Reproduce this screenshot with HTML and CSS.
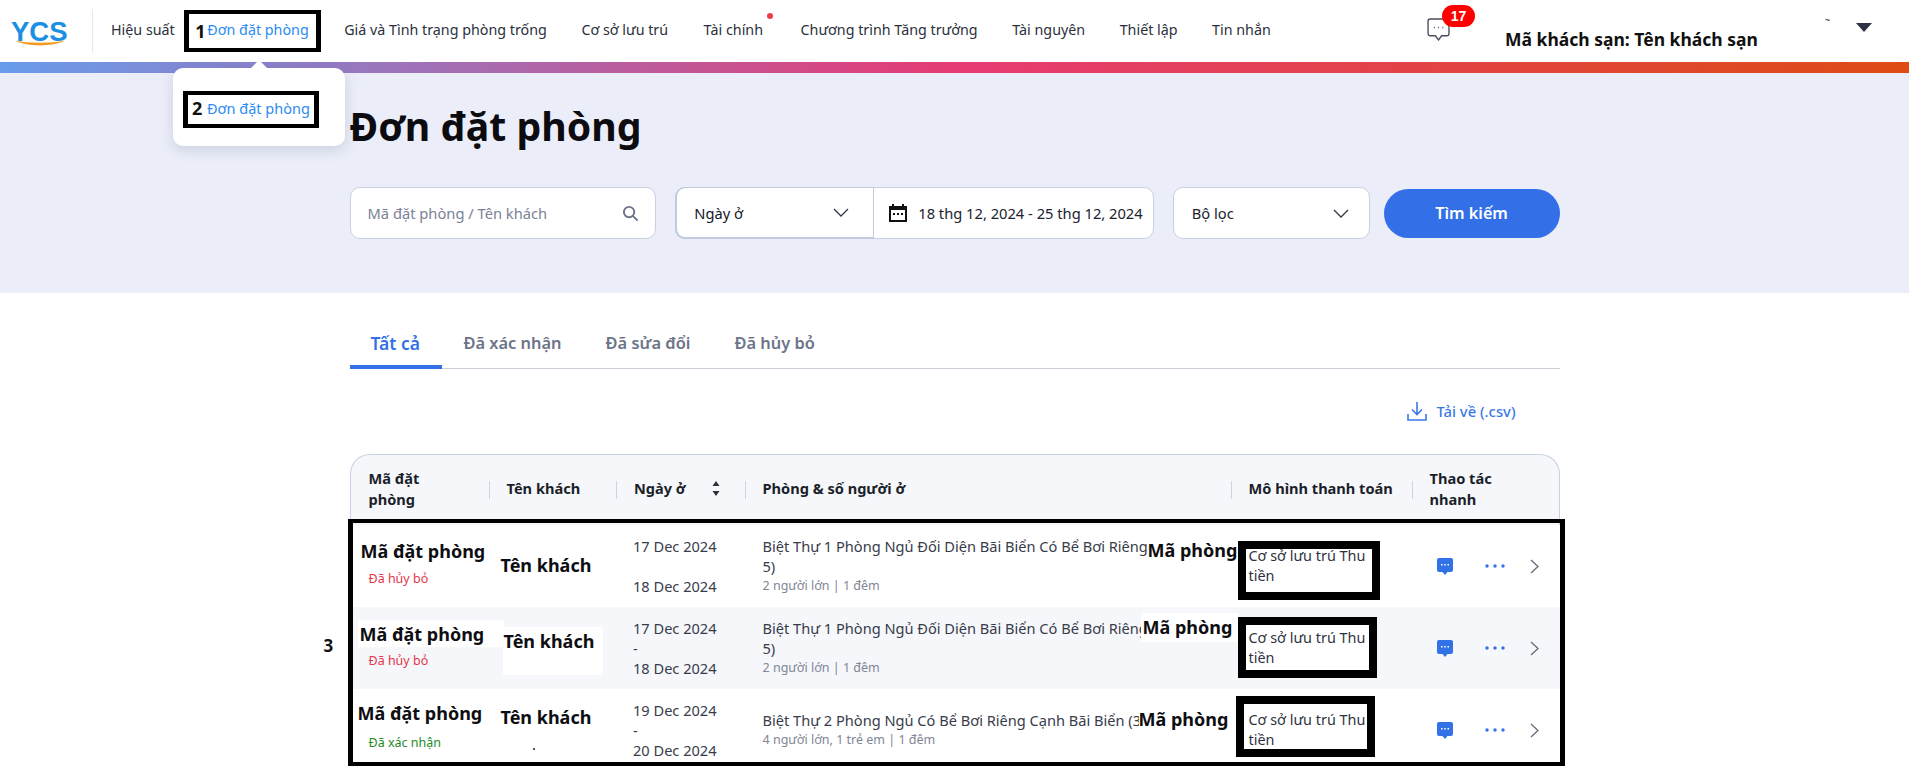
FILE: index.html
```html
<!DOCTYPE html>
<html lang="vi">
<head>
<meta charset="utf-8">
<title>Đơn đặt phòng</title>
<link rel="stylesheet" href="styles.css">
</head>
<body>
<header class="topbar">
  <div class="logo">
    <span class="logo-text">YCS</span>
    <svg class="logo-swoosh" viewBox="0 0 50 6" width="50" height="6"><path d="M0 0.500C14 3.500 36 3.500 50 0.500C38 7 12 7 0 0.500Z" fill="#f29d1f"/></svg>
  </div>
  <nav class="nav">
    <a class="nav-item nav-first">Hiệu suất</a>
    <a class="nav-item nav-active"><span class="mark mark-one"><b>1</b></span>Đơn đặt phòng</a>
    <a class="nav-item">Giá và Tình trạng phòng trống</a>
    <a class="nav-item">Cơ sở lưu trú</a>
    <a class="nav-item nav-dot">Tài chính</a>
    <a class="nav-item">Chương trình Tăng trưởng</a>
    <a class="nav-item">Tài nguyên</a>
    <a class="nav-item">Thiết lập</a>
    <a class="nav-item">Tin nhắn</a>
  </nav>
  <div class="account">
    <div class="inbox">
      <svg viewBox="0 0 22 22" width="23" height="23" fill="none" stroke="#4a4d5e" stroke-width="1.300"><path d="M3 1h16a2 2 0 0 1 2 2v12a2 2 0 0 1-2 2h-5l-3 4-3-4H3a2 2 0 0 1-2-2V3a2 2 0 0 1 2-2Z"/><path d="M6.500 9h.9M10.600 9h.9M14.700 9h.9" stroke-width="1.500"/></svg>
      <span class="badge">17</span>
    </div>
    <strong class="hotel">Mã khách sạn: Tên khách sạn</strong>
    <span class="tilde">~</span>
    <span class="caret"></span>
  </div>
</header>
<div class="rainbow"></div>

<div class="popup">
  <span class="mark mark-two"><b>2</b></span>
  <span class="popup-link">Đơn đặt phòng</span>
</div>

<section class="hero">
  <div class="wrap">
    <h1 class="title">Đơn đặt phòng</h1>
    <div class="filters">
      <div class="field search">
        <span class="placeholder">Mã đặt phòng / Tên khách</span>
        <svg viewBox="0 0 18 18" width="17" height="17" fill="none" stroke="#6d7487" stroke-width="2"><circle cx="7.500" cy="7.500" r="5.500"/><path d="M11.700 11.700 16.500 16.500"/></svg>
      </div>
      <div class="combo">
        <div class="combo-type">
          <span>Ngày ở</span>
          <svg class="chev" viewBox="0 0 16 9" width="16" height="9" fill="none" stroke="#333846" stroke-width="1.300"><path d="M1 1l7 7 7-7"/></svg>
        </div>
        <div class="combo-date">
          <svg viewBox="0 0 20 20" width="20" height="20"><path d="M1 3h3V1h2v2h8V1h2v2h3v16H1Z" fill="#111"/><rect x="3" y="7" width="14" height="10" fill="#fff"/><path d="M5 10h2v2H5zM9 10h2v2H9zM13 10h2v2h-2z" fill="#111"/></svg>
          <span>18 thg 12, 2024 - 25 thg 12, 2024</span>
        </div>
      </div>
      <div class="field select">
        <span>Bộ lọc</span>
        <svg class="chev" viewBox="0 0 16 9" width="16" height="9" fill="none" stroke="#333846" stroke-width="1.300"><path d="M1 1l7 7 7-7"/></svg>
      </div>
      <button class="submit">Tìm kiếm</button>
    </div>
  </div>
</section>

<main class="wrap content">
  <div class="tabs">
    <a class="tab tab-on">Tất cả</a>
    <a class="tab">Đã xác nhận</a>
    <a class="tab">Đã sửa đổi</a>
    <a class="tab">Đã hủy bỏ</a>
  </div>
  <div class="download">
    <svg viewBox="0 0 20 20" width="20" height="20" fill="none" stroke="#3b78e7" stroke-width="1.600"><path d="M10 1v12M5 8.500l5 5 5-5M1 13v6h18v-6"/></svg>
    <span>Tải về (.csv)</span>
  </div>

  <div class="table">
    <div class="thead">
      <div class="th">Mã đặt<br>phòng</div>
      <div class="th th-sep">Tên khách</div>
      <div class="th th-sep th-sort"><span class="th-date">Ngày ở</span>
        <svg viewBox="0 0 8 15" width="8" height="15" fill="#2c2f3a"><path d="M4 0l3.500 5H.5ZM4 15l3.500-5H.5Z"/></svg>
      </div>
      <div class="th th-sep">Phòng &amp; số người ở</div>
      <div class="th th-sep">Mô hình thanh toán</div>
      <div class="th th-sep">Thao tác<br>nhanh</div>
    </div>

    <div class="row">
      <div class="cell"><span class="status status-off">Đã hủy bỏ</span></div>
      <div class="cell"></div>
      <div class="cell dates">17 Dec 2024<br>&nbsp;<br>18 Dec 2024</div>
      <div class="cell room">Biệt Thự 1 Phòng Ngủ Đối Diện Bãi Biển Có Bể Bơi Riêng<br>5)<small>2 người lớn | 1 đêm</small></div>
      <div class="cell pay">Cơ sở lưu trú Thu tiền</div>
      <div class="cell actions">
        <svg class="a-chat" viewBox="0 0 16 17" width="16" height="17"><path d="M2 0h12a2 2 0 0 1 2 2v10a2 2 0 0 1-2 2h-3.500L8 17l-2.500-3H2a2 2 0 0 1-2-2V2a2 2 0 0 1 2-2Z" fill="#3371e6"/><path d="M4 6h1.500v1.500H4zM7.250 6h1.500v1.500h-1.500zM10.500 6H12v1.500h-1.500z" fill="#fff"/></svg>
        <svg class="a-dots" viewBox="0 0 20 4" width="20" height="4" fill="#3371e6"><circle cx="2" cy="2" r="1.700"/><circle cx="10" cy="2" r="1.700"/><circle cx="18" cy="2" r="1.700"/></svg>
        <svg class="a-next" viewBox="0 0 9 15" width="9" height="15" fill="none" stroke="#656b7a" stroke-width="1.300"><path d="M1 1l7 6.500-7 6.500"/></svg>
      </div>
      <b class="stamp id-a">Mã đặt phòng</b>
      <b class="stamp name-a">Tên khách</b>
      <b class="stamp room-a">Mã phòng</b>
      <span class="paybox pay-a"></span>
    </div>

    <div class="row row-alt">
      <div class="cell"><span class="status status-off">Đã hủy bỏ</span></div>
      <div class="cell"></div>
      <div class="cell dates">17 Dec 2024<br>-<br>18 Dec 2024</div>
      <div class="cell room">Biệt Thự 1 Phòng Ngủ Đối Diện Bãi Biển Có Bể Bơi Riêng<br>5)<small>2 người lớn | 1 đêm</small></div>
      <div class="cell pay">Cơ sở lưu trú Thu tiền</div>
      <div class="cell actions">
        <svg class="a-chat" viewBox="0 0 16 17" width="16" height="17"><path d="M2 0h12a2 2 0 0 1 2 2v10a2 2 0 0 1-2 2h-3.500L8 17l-2.500-3H2a2 2 0 0 1-2-2V2a2 2 0 0 1 2-2Z" fill="#3371e6"/><path d="M4 6h1.500v1.500H4zM7.250 6h1.500v1.500h-1.500zM10.500 6H12v1.500h-1.500z" fill="#fff"/></svg>
        <svg class="a-dots" viewBox="0 0 20 4" width="20" height="4" fill="#3371e6"><circle cx="2" cy="2" r="1.700"/><circle cx="10" cy="2" r="1.700"/><circle cx="18" cy="2" r="1.700"/></svg>
        <svg class="a-next" viewBox="0 0 9 15" width="9" height="15" fill="none" stroke="#656b7a" stroke-width="1.300"><path d="M1 1l7 6.500-7 6.500"/></svg>
      </div>
      <b class="stamp id-b">Mã đặt phòng</b>
      <b class="stamp name-b">Tên khách</b>
      <b class="stamp room-b">Mã phòng</b>
      <span class="paybox pay-b"></span>
    </div>

    <div class="row row-last">
      <div class="cell"><span class="status status-on">Đã xác nhận</span></div>
      <div class="cell"></div>
      <div class="cell dates">19 Dec 2024<br>-<br>20 Dec 2024</div>
      <div class="cell room">Biệt Thự 2 Phòng Ngủ Có Bể Bơi Riêng Cạnh Bãi Biển (3)<small>4 người lớn, 1 trẻ em | 1 đêm</small></div>
      <div class="cell pay">Cơ sở lưu trú Thu tiền</div>
      <div class="cell actions">
        <svg class="a-chat" viewBox="0 0 16 17" width="16" height="17"><path d="M2 0h12a2 2 0 0 1 2 2v10a2 2 0 0 1-2 2h-3.500L8 17l-2.500-3H2a2 2 0 0 1-2-2V2a2 2 0 0 1 2-2Z" fill="#3371e6"/><path d="M4 6h1.500v1.500H4zM7.250 6h1.500v1.500h-1.500zM10.500 6H12v1.500h-1.500z" fill="#fff"/></svg>
        <svg class="a-dots" viewBox="0 0 20 4" width="20" height="4" fill="#3371e6"><circle cx="2" cy="2" r="1.700"/><circle cx="10" cy="2" r="1.700"/><circle cx="18" cy="2" r="1.700"/></svg>
        <svg class="a-next" viewBox="0 0 9 15" width="9" height="15" fill="none" stroke="#656b7a" stroke-width="1.300"><path d="M1 1l7 6.500-7 6.500"/></svg>
      </div>
      <b class="stamp id-c">Mã đặt phòng</b>
      <b class="stamp name-c">Tên khách</b>
      <b class="stamp room-c">Mã phòng</b>
      <span class="paybox pay-c"></span>
      <i class="speck"></i>
    </div>

    <span class="frame"></span>
    <b class="frame-no">3</b>
  </div>
</main>
</body>
</html>
```
FILE: styles.css
```css
* { box-sizing: border-box; }
html, body { margin: 0; height: 769px; overflow: hidden; }
body {
  position: relative;
  font-family: "Noto Sans", "Open Sans", sans-serif;
  font-size: 14.700px;
  color: #2b2f3b;
  background: #fff;
}

/* top bar */
.topbar { display: flex; align-items: center; height: 62px; background: #fff; padding-left: 11px; }
.logo { position: relative; width: 82px; height: 44px; border-right: 1px solid #e6e8ef; flex: none; }
.logo-text {
  display: block;
  width: 58px;
  font: bold 27.500px/30px "Liberation Sans", sans-serif;
  color: #1c8fe3;
  margin-top: 8px;
}
.logo-swoosh { position: absolute; left: 4px; top: 31px; }
.nav { display: flex; flex: none; width: 1158px; align-items: center; gap: 34.500px; margin-left: 18px; padding-bottom: 2px; }
.nav-first { margin-right: -2px; }
.nav-item { position: relative; white-space: nowrap; font-size: 14.300px; line-height: 20px; color: #2b2f3b; }
.nav-active { color: #2b8bf2; margin-right: 1px; }
.nav-dot { margin-left: 1px; margin-right: 3px; }
.nav-dot::after {
  content: "";
  position: absolute;
  right: -10px;
  top: -7px;
  width: 6px;
  height: 6px;
  border-radius: 50%;
  background: #ee3a4e;
}
.mark {
  position: absolute;
  border: solid #000;
  border-width: 4px 5px;
  color: #111;
  font-size: 18px;
  line-height: 24px;
  pointer-events: none;
}
.mark-one { left: -23px; top: -10px; width: 137px; height: 42px; padding: 5px 0 0 6px; }
.mark-two { left: 10px; top: 23px; width: 136px; height: 37px; padding: 1px 0 0 4px; }

.account { position: relative; flex: 1; align-self: stretch; }
.inbox { position: absolute; left: 158px; top: 18px; width: 23px; height: 23px; }
.badge {
  position: absolute;
  left: 15px;
  top: -13px;
  width: 33px;
  height: 22px;
  border-radius: 11px;
  background: #fe0000;
  color: #fff;
  font: bold 14px/22px "Liberation Sans", sans-serif;
  text-align: center;
}
.hotel { position: absolute; left: 236px; top: 27px; white-space: nowrap; font-size: 17.500px; line-height: 24px; color: #111; }
.tilde { position: absolute; left: 556px; top: 14px; font-size: 9px; line-height: 12px; color: #111; }
.caret {
  position: absolute;
  left: 587px;
  top: 23px;
  border-left: 8px solid transparent;
  border-right: 8px solid transparent;
  border-top: 9px solid #2e3043;
}
.rainbow { height: 11px; background: linear-gradient(90deg, #689cec 0, #e63b74 50%, #df4b14 100%); }

/* menu */
.popup {
  position: absolute;
  left: 173px;
  top: 68px;
  width: 172px;
  height: 78px;
  background: #fff;
  border-radius: 10px;
  box-shadow: 0 4px 14px rgba(60, 70, 110, .18);
  z-index: 5;
}
.popup::before {
  content: "";
  position: absolute;
  left: 78px;
  top: -8px;
  border-left: 8px solid transparent;
  border-right: 8px solid transparent;
  border-bottom: 8px solid #fff;
}
.popup-link { position: absolute; left: 34px; top: 30px; white-space: nowrap; font-size: 14.500px; line-height: 20px; color: #2b8bf2; }

/* hero */
.wrap { width: 1210px; margin: 0 auto; }
.hero { height: 220px; background: #ebeef8; }
.title { margin: 0; padding-top: 26px; height: 114px; font-size: 39.200px; line-height: 54px; font-weight: 700; color: #0c0c10; }
.filters { display: flex; align-items: center; }
.field, .combo { height: 52px; background: #fff; border: 1px solid #c8d0e2; border-radius: 10px; }
.field { display: flex; align-items: center; justify-content: space-between; }
.search { width: 307px; padding: 0 16px 0 17px; }
.placeholder { color: #7a8296; }
.combo { display: flex; width: 479px; margin-left: 19px; }
.combo-type {
  display: flex;
  align-items: center;
  justify-content: space-between;
  width: 199px;
  padding: 0 24px 0 17px;
  border: solid #c1cbe0;
  border-width: 1px 1px 2px 2px;
  border-radius: 10px 0 0 10px;
  margin: -1px 0 -1px -1px;
  color: #15171f;
}
.combo-date { display: flex; align-items: center; gap: 10px; padding-left: 14px; white-space: nowrap; color: #20232d; }
.select { width: 197px; margin-left: 19px; padding: 0 20px 0 18px; color: #20232d; }
.submit {
  width: 176px;
  height: 49px;
  margin-left: 14px;
  border: 0;
  border-radius: 25px;
  background: #3370e8;
  color: #fff;
  font: 600 16.200px "Noto Sans", sans-serif;
}

/* tabs */
.tabs { display: flex; height: 76px; padding-top: 31px; border-bottom: 1px solid #c9ced8; }
.tab {
  height: 45px;
  padding: 8px 22px 0;
  font-size: 16.400px;
  line-height: 22px;
  font-weight: 600;
  color: #6c7488;
  white-space: nowrap;
}
.tab-on { width: 92px; color: #3370e8; border-bottom: 4px solid #3370e8; border-radius: 2px 2px 0 0; padding-left: 21px; padding-right: 0; font-size: 17.500px; }
.download { display: flex; justify-content: flex-end; align-items: center; gap: 9px; height: 85px; padding: 0 44px 1px 0; color: #3b78e7; font-weight: 500; font-size: 14.800px; }

/* table */
.table { position: relative; }
.thead, .row { display: grid; grid-template-columns: 138px 127.500px 128.500px 486px 181px 149px; }
.thead {
  height: 71px;
  background: #f5f7fb;
  border: 1px solid #c8d2e4;
  border-bottom: 0;
  border-radius: 20px 20px 0 0;
}
.th {
  position: relative;
  display: flex;
  align-items: center;
  gap: 26px;
  padding: 0 18px;
  margin-bottom: 3px;
  font-weight: 700;
  font-size: 14.600px;
  line-height: 21px;
  color: #1c1f29;
}
.th-sep::before {
  content: "";
  position: absolute;
  left: 0;
  top: 26px;
  height: 18px;
  border-left: 1px solid #cdd5e3;
}
.th-date { font-size: 14.500px; }
.row { position: relative; height: 82px; background: #fff; align-items: center; }
.row-alt { background: #f5f7fb; }
.cell { position: relative; padding-left: 19px; line-height: 20px; font-size: 14.600px; color: #383c4a; white-space: nowrap; min-width: 0; }
.status { display: block; margin-top: 26px; font-size: 12.500px; line-height: 18px; }
.status-off { color: #e6364a; }
.status-on { color: #1f8a28; }
.dates { padding-left: 18px; }
.room { overflow: hidden; }
.row-alt .room { max-width: 397px; }
.row-last .room { max-width: 395px; }
.room small { display: block; font-size: 12.500px; color: #7f8696; }
.pay { z-index: 1; white-space: normal; max-width: 150px; padding-right: 5px; font-size: 14.400px; color: #2e3240; }
.actions { display: flex; align-items: center; padding-left: 26px; }
.a-dots { margin-left: 32px; }
.a-next { margin-left: 25px; }

/* pasted-over labels */
.stamp { position: absolute; z-index: 2; white-space: nowrap; font-size: 18px; line-height: 24px; color: #0e0e12; }
.id-a { left: 11px; top: 14px; }
.name-a { left: 151px; top: 28px; }
.room-a { left: 798px; top: 13px; }
.id-b { left: 8px; top: 13px; width: 146px; height: 27px; padding: 2px 0 0 2px; background: #fff; }
.name-b { left: 153px; top: 20px; width: 100px; height: 48px; padding: 2px 0 0 1px; background: #fff; }
.room-b { left: 791px; top: 6px; width: 97px; height: 29px; padding: 2px 0 0 2px; background: #fff; }
.id-c { left: 8px; top: 12px; }
.name-c { left: 151px; top: 16px; }
.room-c { left: 789px; top: 18px; }
.paybox { position: absolute; border: 8px solid #000; background: #fff; }
.pay-a { left: 888px; top: 16px; width: 142px; height: 59px; }
.pay-b { left: 888px; top: 10px; width: 139px; height: 61px; }
.pay-c { left: 886px; top: 7px; width: 139px; height: 61px; }
.speck { position: absolute; left: 183px; top: 59px; width: 2px; height: 2px; background: #555; }
.frame {
  position: absolute;
  left: -2px;
  top: 65px;
  width: 1217px;
  height: 247px;
  border: solid #000;
  border-width: 4px 5px;
  z-index: 3;
  pointer-events: none;
}
.frame-no { position: absolute; left: -26px; top: 180px; font-size: 17px; line-height: 24px; color: #111; }
```
